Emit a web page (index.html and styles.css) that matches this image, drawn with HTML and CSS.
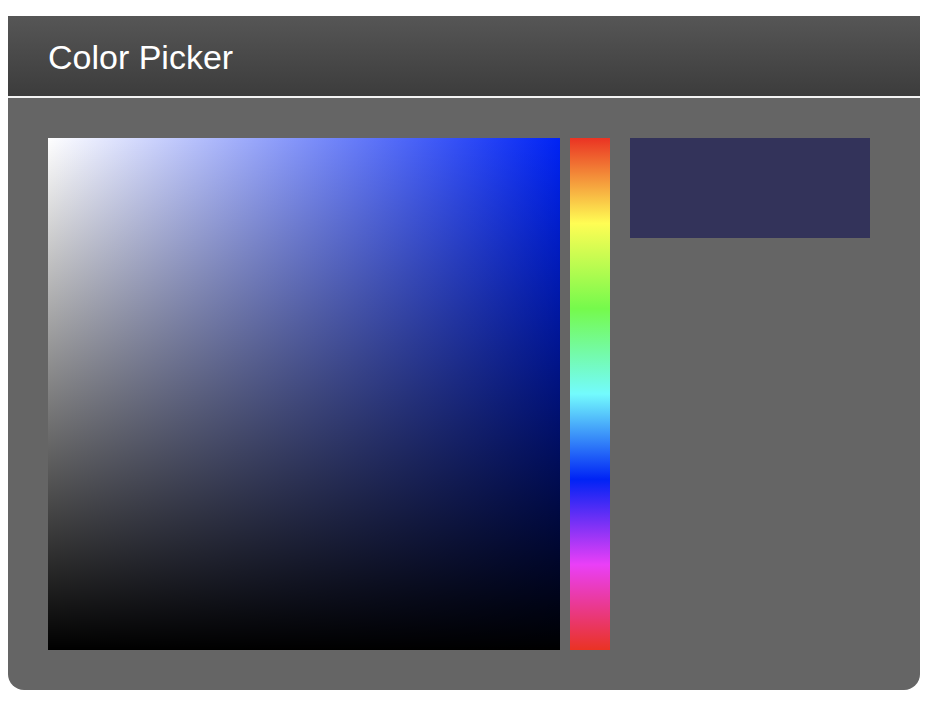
FILE: index.html
```html
<!DOCTYPE html>
<html>
<head>
<meta charset="utf-8">
<title>Color Picker</title>
<link rel="stylesheet" href="styles.css">
</head>
<body>
<div class="panel">
  <div class="header"><h1 class="title">Color Picker</h1></div>
  <div class="content">
    <div class="sat-square"><div class="sat-dark"></div></div>
    <div class="hue-bar"></div>
    <div class="preview"></div>
  </div>
</div>
</body>
</html>
```
FILE: styles.css
```css
html, body {
  margin: 0;
  padding: 0;
  background: #ffffff;
}
body {
  padding: 16px 18px 0 8px;
  font-family: "Liberation Sans", Arial, Helvetica, sans-serif;
}
.panel {
  width: 912px;
  background: #656565;
  border-radius: 0 0 16px 16px;
  overflow: hidden;
}
.header {
  height: 80px;
  display: flex;
  align-items: center;
  padding-left: 40px;
  background: linear-gradient(to bottom, #565656 0%, #3c3c3c 100%);
  border-bottom: 2px solid #f4f4f4;
  box-sizing: content-box;
}
.title {
  margin: 0;
  font-size: 34px;
  font-weight: normal;
  color: #ffffff;
  line-height: 1;
  padding-top: 1px;
}
.content {
  display: flex;
  align-items: flex-start;
  padding: 40px;
}
.sat-square {
  width: 512px;
  height: 512px;
  background: linear-gradient(to right, #ffffff 0%, rgb(0, 35, 245) 100%);
  position: relative;
}
.sat-dark {
  position: absolute;
  inset: 0;
  background: linear-gradient(to bottom, rgba(0,0,0,0) 0%, #000000 100%);
}
.hue-bar {
  width: 40px;
  height: 512px;
  margin-left: 10px;
  background: linear-gradient(to bottom,
    rgb(234, 51, 35) 0%,
    rgb(255, 253, 84) 16.67%,
    rgb(117, 250, 76) 33.33%,
    rgb(115, 251, 253) 50%,
    rgb(0, 35, 245) 66.67%,
    rgb(234, 63, 247) 83.33%,
    rgb(234, 51, 35) 100%);
}
.preview {
  width: 240px;
  height: 100px;
  margin-left: 20px;
  background: #33335a;
}
```
